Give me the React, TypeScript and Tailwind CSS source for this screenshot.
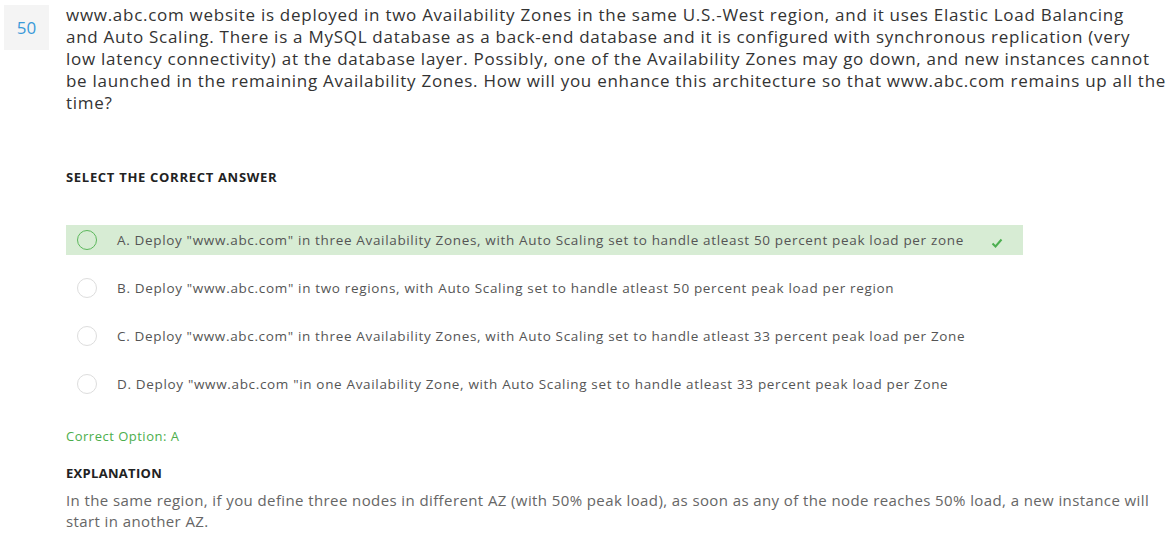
const options = [
  { key: 'A', text: 'A. Deploy "www.abc.com" in three Availability Zones, with Auto Scaling set to handle atleast 50 percent peak load per zone', correct: true },
  { key: 'B', text: 'B. Deploy "www.abc.com" in two regions, with Auto Scaling set to handle atleast 50 percent peak load per region', correct: false },
  { key: 'C', text: 'C. Deploy "www.abc.com" in three Availability Zones, with Auto Scaling set to handle atleast 33 percent peak load per Zone', correct: false },
  { key: 'D', text: 'D. Deploy "www.abc.com "in one Availability Zone, with Auto Scaling set to handle atleast 33 percent peak load per Zone', correct: false },
];

function Check() {
  return (
    <svg width="12" height="10" viewBox="0 0 12 10" className="mt-[6px] text-[#4caf50]">
      <path d="M1.5 5.5 L4.5 8.5 L10.5 1.5" fill="none" stroke="currentColor" strokeWidth="2" />
    </svg>
  );
}

export default function App() {
  return (
    <div className="min-h-[537px] w-[1168px] bg-white font-['Open_Sans',sans-serif]">
      <div className="flex gap-[17px] pl-[4px] pt-[5px]">
        <div className="flex h-[45px] w-[45px] shrink-0 items-center justify-center bg-[#f4f4f4] text-[17px] text-[#3a9ad9]">
          50
        </div>
        <p className="-mt-[1px] whitespace-nowrap text-[17px] leading-[22px] tracking-[0.72px] text-[#333]">
          www.abc.com website is deployed in two Availability Zones in the same U.S.-West region, and it uses Elastic Load Balancing
          <br />
          and Auto Scaling. There is a MySQL database as a back-end database and it is configured with synchronous replication (very
          <br />
          low latency connectivity) at the database layer. Possibly, one of the Availability Zones may go down, and new instances cannot
          <br />
          be launched in the remaining Availability Zones. How will you enhance this architecture so that www.abc.com remains up all the
          <br />
          time?
        </p>
      </div>

      <div className="pl-[66px]">
        <h2 className="mt-[54px] text-[13px] font-bold leading-[18px] tracking-[0.7px] text-[#222]">SELECT THE CORRECT ANSWER</h2>

        <ul className="mt-[39px] w-[957px]">
          {options.map((o) => (
            <li
              key={o.key}
              className={`mb-[18px] flex h-[30px] items-center pl-[11px] pr-[20px] ${o.correct ? 'bg-[#d7ecd4]' : ''}`}
            >
              <span
                className={`h-[20px] w-[20px] shrink-0 rounded-full border ${o.correct ? 'border-[#5cb85c]' : 'border-[#ddd]'}`}
              />
              <span className="ml-[20px] flex-1 text-[13.5px] tracking-[0.66px] text-[#555]">{o.text}</span>
              {o.correct && <Check />}
            </li>
          ))}
        </ul>

        <div className="mt-[28px] text-[13px] tracking-[0.5px] text-[#4cae4c]">Correct Option: A</div>
        <h3 className="mt-[17px] text-[13px] font-bold tracking-[0.3px] text-[#222]">EXPLANATION</h3>
        <p className="mt-[7px] text-[15px] leading-[21px] tracking-[0.4px] text-[#666]">
          In the same region, if you define three nodes in different AZ (with 50% peak load), as soon as any of the node reaches 50% load, a new instance will
          start in another AZ.
        </p>
      </div>
    </div>
  );
}
